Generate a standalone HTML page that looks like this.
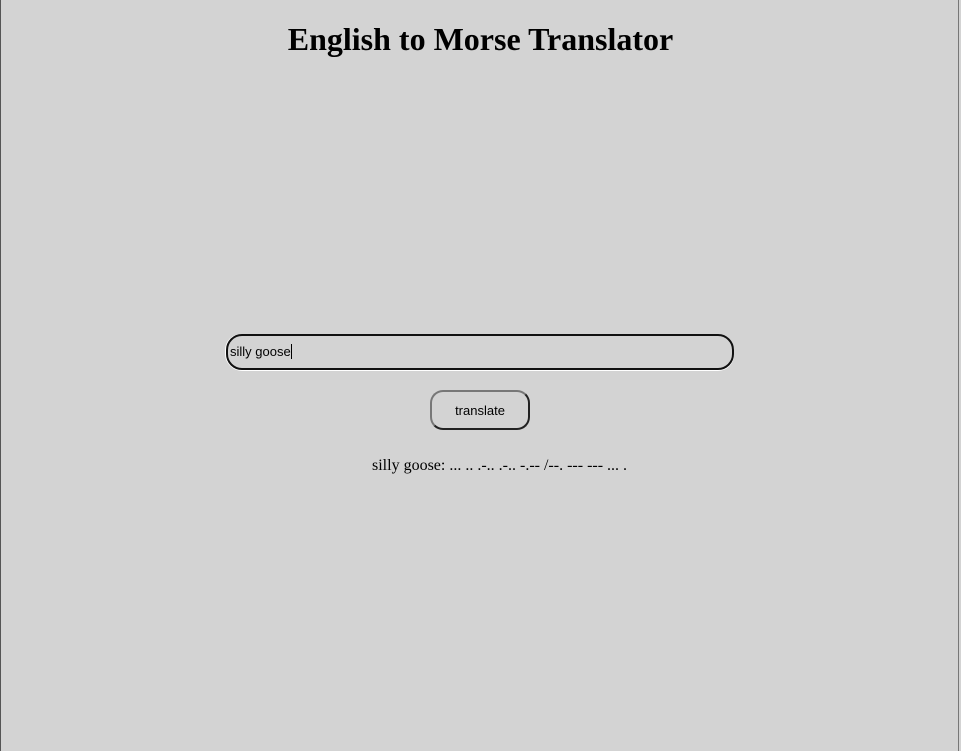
<!DOCTYPE html>
<html><head><style>
html,body{margin:0;padding:0;}
body{width:961px;height:751px;background:#d3d3d3;position:relative;overflow:hidden;font-family:"Liberation Serif",serif;}
.bl{position:absolute;left:0;top:0;width:1px;height:751px;background:#555;}
.br{position:absolute;left:958px;top:0;width:1px;height:751px;background:#777;}
h1{position:absolute;left:0;width:961px;top:21px;margin:0;text-align:center;font-size:32px;font-weight:bold;line-height:37px;color:#000;}
.inp{position:absolute;left:226px;top:334px;width:504px;height:32px;border:2px solid #111;border-radius:16px;box-shadow:0 1px 0 #fff,-1px 0 0 #fff;box-sizing:content-box;font-family:"Liberation Sans",sans-serif;font-size:13px;line-height:32px;}
.inp span{position:absolute;left:2px;top:0;}
.inp i{display:inline-block;width:1px;height:15px;background:#000;vertical-align:-3px;}
.btn{position:absolute;left:430px;top:390px;width:96px;height:36px;border:2px solid;border-color:#777 #222 #222 #777;border-radius:13px;text-align:center;line-height:37px;font-family:"Liberation Sans",sans-serif;font-size:13px;color:#000;}
.out{position:absolute;left:372px;top:457px;font-size:16px;line-height:18px;white-space:pre;}
</style></head><body>
<div class="bl"></div><div class="br"></div>
<h1>English to Morse Translator</h1>
<div class="inp"><span>silly goose<i></i></span></div>
<div class="btn">translate</div>
<div class="out">silly goose: ... .. .-.. .-.. -.-- /--. --- --- ... .</div>
</body></html>
